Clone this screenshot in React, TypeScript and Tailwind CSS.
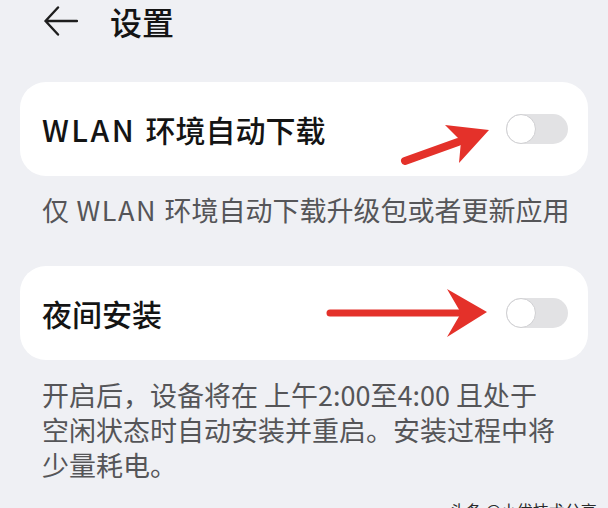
import React from "react";

const cjk = { fontFamily: '"Noto Sans CJK SC", "Noto Sans", sans-serif' };

function Toggle() {
  return (
    <div className="relative h-[30px] w-[62px] rounded-full bg-[#e2e2e4]">
      <div className="absolute left-0 top-0 h-[30px] w-[30px] rounded-full border-[1.5px] border-[#cfcfd2] bg-white" />
    </div>
  );
}

function SettingCard({ children }: { children: React.ReactNode }) {
  return (
    <div className="mx-[20px] flex h-[94px] items-center justify-between rounded-[26px] bg-white pl-[22px] pr-[20px]">
      <span className="text-[30px] font-medium leading-none text-[#141414]">{children}</span>
      <Toggle />
    </div>
  );
}

export default function App() {
  return (
    <div className="relative h-[508px] w-[608px] overflow-hidden bg-[#eff0f4]" style={cjk}>
      {/* top bar */}
      <div className="flex h-[41px] items-center pl-[44px]">
        <svg width="34" height="30" viewBox="0 0 34 30" fill="none">
          <path d="M14 1.5 L1.5 15 L14 28.5 M1.5 15 H33" stroke="#1e1e1e" strokeWidth="2.4" strokeLinecap="round" strokeLinejoin="round" />
        </svg>
        <span className="ml-[32px] text-[32px] font-medium leading-none text-[#141414]">设置</span>
      </div>

      <div className="mt-[41px]">
        <SettingCard>
          <span className="tracking-[2.5px]">WLAN </span>环境自动下载
        </SettingCard>
      </div>
      <p className="pl-[42px] pt-[16px] text-[27px] leading-[36px] text-[#555558]">
        仅<span className="tracking-[1.5px]"> WLAN </span>环境自动下载升级包或者更新应用
      </p>

      <div className="mt-[38px]">
        <SettingCard>夜间安装</SettingCard>
      </div>
      <p className="pl-[42px] pt-[17px] text-[27px] leading-[35px] text-[#555558]">
        开启后，设备将在 上午2:00至4:00 且处于
        <br />
        空闲状态时自动安装并重启。安装过程中将
        <br />
        少量耗电。
      </p>

      {/* watermark */}
      <span className="absolute left-[450px] top-[502px] text-[16px] leading-none text-[#2a2a2a]">
        头条 @小优技术分享
      </span>

      {/* red annotation arrows */}
      <svg className="pointer-events-none absolute inset-0" width="608" height="508" viewBox="0 0 608 508">
        <line x1="405" y1="161" x2="458" y2="142" stroke="#e4312a" strokeWidth="8" strokeLinecap="round" />
        <polygon points="489,130 445,125 461,141 459,163" fill="#e4312a" />
        <line x1="330" y1="313" x2="465" y2="313" stroke="#e4312a" strokeWidth="7" strokeLinecap="round" />
        <polygon points="487,312 447,289 461,313 447,337" fill="#e4312a" />
      </svg>
    </div>
  );
}
